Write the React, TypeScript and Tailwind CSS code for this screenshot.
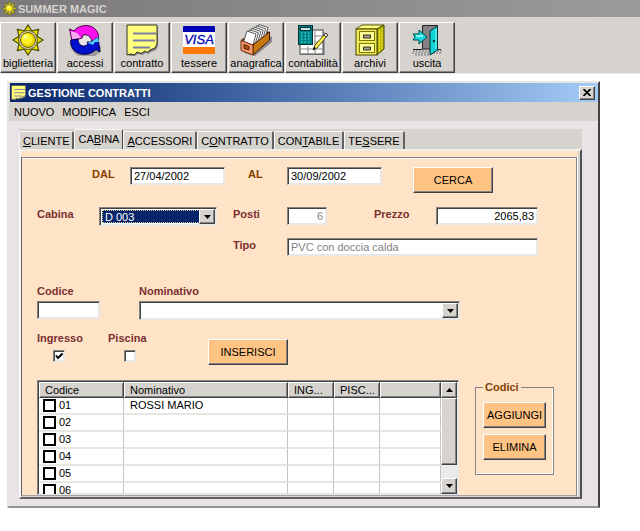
import { useState } from 'react';
import type { InputHTMLAttributes, ReactNode } from 'react';
import clsx from 'clsx';

const sunken =
  'border border-t-[#848284] border-l-[#848284] border-r-[#e7e7e7] border-b-[#e7e7e7] shadow-[inset_1px_1px_0_#424142,inset_-1px_-1px_0_#e7e7e7]';
const raised =
  'border border-t-white border-l-white border-r-[#424142] border-b-[#424142] shadow-[inset_-1px_-1px_0_#848284]';

const rays = [0, 45, 90, 135, 180, 225, 270, 315];

function SunIcon({ className }: { className: string }) {
  return (
    <svg viewBox="0 0 32 32" className={className} aria-hidden="true">
      {rays.map((angle) => (
        <path
          key={angle}
          d="M11 9 L16 1 L21 9 Z"
          fill="#efe300"
          stroke="#4a4a00"
          strokeWidth="1.2"
          transform={`rotate(${angle} 16 16)`}
        />
      ))}
      <circle cx="16" cy="16" r="9.500" fill="#d6d3ce" stroke="#5a5a00" strokeWidth="1" />
      <circle cx="16" cy="16" r="7.5" fill="#e7cf00" stroke="#6b6100" strokeWidth="1" />
      <circle cx="15" cy="15" r="5.5" fill="#fff22a" />
      <circle cx="13.5" cy="13" r="2" fill="#ffffa0" />
    </svg>
  );
}

function NoteIcon({ className }: { className: string }) {
  return (
    <svg viewBox="0 0 32 32" className={className} aria-hidden="true">
      <path d="M3 3 H32 V22 L30 26 L25 28 L22 30 L20 29 L16 31 L12 30 L9 32 H3 Z" fill="#848284" />
      <path
        d="M1 1 H31 V20 L29 24 L24 26 L21 28.500 L19 27 L15 29.500 L11 28 L8 31 L5 30 L1 31 Z"
        fill="#ffff7b"
        stroke="#31302a"
        strokeWidth="1"
      />
      <path d="M7 9.5 H30 M7 16.5 H29 M7 23.5 H24" stroke="#7b7da5" strokeWidth="2" />
    </svg>
  );
}

function AccessIcon() {
  return (
    <svg viewBox="0 0 32 32" className="size-8" aria-hidden="true">
      <path d="M5 20 A13 12 0 0 0 30 22" fill="none" stroke="#9c9a9c" strokeWidth="8" />
      <path d="M5 12 H24 V24 H8 Z" fill="#e7e3e7" />
      <path
        d="M0.500 5 L5 7 C9 1 22 -1 27 6 C30 10 30 13 29 16 L23 18 C22 12 18 10 14 11 L13 14 L3 17 Z"
        fill="#ff10ef"
        stroke="#4a004a"
        strokeWidth="1"
      />
      <path d="M3.500 16 L1.500 7 L8 9 L12 13.500 Z" fill="#f7aaef" />
      <path
        d="M31 28 L27 25.500 C21 32 9 32 4 25 C2 22 1 19 2 16 L9 15 C9 22 15 24 19 20 L18 18 L22 18 L29 13 Z"
        fill="#0010ce"
        stroke="#00004a"
        strokeWidth="1"
      />
      <path d="M29 13 L30 18 L26 18 L24 21 L18 18.500 L22 18 Z" fill="#52cbf7" />
    </svg>
  );
}

function VisaIcon() {
  return (
    <svg viewBox="0 0 32 32" className="size-8" aria-hidden="true">
      <rect x="0" y="2" width="32" height="28" rx="1" fill="#fff" />
      <path d="M0 8 V3 Q0 2 1 2 H31 Q32 2 32 3 V8 Z" fill="#0000b5" />
      <path d="M0 23 H32 V29 Q32 30 31 30 H1 Q0 30 0 29 Z" fill="#ff7900" />
      <text
        x="16"
        y="20"
        textAnchor="middle"
        fontFamily="'Liberation Sans', Arial, sans-serif"
        fontSize="13"
        fontStyle="italic"
        fill="#0000b5"
        stroke="#0000b5"
        strokeWidth="0.300"
      >
        VISA
      </text>
    </svg>
  );
}

function CardBoxIcon() {
  return (
    <svg viewBox="0 0 32 32" className="size-8" aria-hidden="true">
      <path d="M4 29 L15 32 L32 18 V12 Z" fill="#8c8a8c" />
      <path d="M1 16 L18 4 L29 8 L13 21 Z" fill="#5a2800" />
      {[5, 4, 3, 2, 1, 0].map((step) => (
        <path
          key={step}
          d="M3.500 18 L7 7 L16 10 L13 21 Z"
          fill="#fff"
          stroke="#5a595a"
          strokeWidth="1"
          transform={`translate(${step * 2.4} ${step * -1.3})`}
        />
      ))}
      <path d="M13 21 L29.500 8 V16 L13 31 Z" fill="#c67910" stroke="#4a1800" strokeWidth="1" />
      <path d="M1 16.500 L13 21 V31 L1 26.500 Z" fill="#f79a73" stroke="#6b2800" strokeWidth="1" />
      <path d="M4 20.500 L9 22.500 V26 L4 24.500 Z" fill="#ad5110" stroke="#5a2000" strokeWidth="1" />
    </svg>
  );
}

function CalculatorIcon() {
  return (
    <svg viewBox="0 0 32 32" className="size-8" aria-hidden="true">
      <rect x="4" y="8" width="24" height="23" fill="#9c9a9c" />
      <rect x="3" y="6" width="23" height="24" fill="#fff" stroke="#424142" />
      <path d="M18 7 V30 M11 22 V30 M17 12 H26 M17 18 H26 M3 25 H26" stroke="#8c8a8c" />
      <rect x="1.500" y="1.500" width="14" height="19" fill="#008284" stroke="#003031" />
      <rect x="3.500" y="3.500" width="10" height="3" fill="#c6e7e7" stroke="#003031" />
      {[9, 12, 15, 18].map((y) => (
        <path key={y} d={`M4 ${y} H13`} stroke="#31cfce" strokeWidth="1.500" strokeDasharray="1.500 2" />
      ))}
      <path d="M29 9 L31 11 L20 24 L16 26 L18 21 Z" fill="#ffef42" stroke="#42412a" strokeWidth="1" />
      <path d="M29 9 L31 11 L29 13 L27 11 Z" fill="#e7e3e7" stroke="#42412a" strokeWidth="1" />
      <path d="M16 26 L17 23 L19 24 Z" fill="#000" />
    </svg>
  );
}

function CabinetIcon() {
  return (
    <svg viewBox="0 0 32 32" className="size-8" aria-hidden="true">
      <path d="M2 5 L8 1 H30 L23 5 Z" fill="#ffff84" stroke="#5a5900" />
      <path d="M23 5 L30 1 V25 L23 31 Z" fill="#bdba00" stroke="#424100" />
      <rect x="2" y="5" width="21" height="26" fill="#efeb52" stroke="#424100" />
      <g fill="#ffff9c" stroke="#7b7900">
        <rect x="5.500" y="7.500" width="15" height="9" />
        <rect x="5.500" y="19.500" width="15" height="9" />
      </g>
      <path d="M9.500 11 H16.500 V14 H9.500 Z M9.500 23 H16.500 V26 H9.500 Z" fill="#a5a2a5" stroke="#313000" />
      <path d="M25.500 7 V28 M28 5 V25" stroke="#e7e342" strokeDasharray="2 1" />
    </svg>
  );
}

function ExitIcon() {
  return (
    <svg viewBox="0 0 32 32" className="size-8" aria-hidden="true">
      <path d="M2 27 H31 M1 29 H30 M4 31 H18" stroke="#a5a2a5" strokeWidth="2" strokeDasharray="2 1" />
      <path d="M11.500 1.500 H26.500 V25 H11.500 Z" fill="#848284" stroke="#212021" />
      <path d="M2 25.500 H11.500 M27 25.500 H30" stroke="#212021" />
      <path d="M19 7 L26.500 2 V26 L19 31 Z" fill="#10d3d6" stroke="#003031" />
      <path d="M25 5 V25" stroke="#84ffff" />
      <circle cx="23" cy="17" r="1.200" fill="#003031" />
      <path d="M2 10 H8 V6 L16 13 L8 20 V16 H2 L4 13 Z" fill="#18d7de" stroke="#004a4a" strokeWidth="1" />
      <path d="M5 12 H12" stroke="#a5ffff" strokeWidth="1.500" />
    </svg>
  );
}

const toolbar = [
  { label: 'biglietteria', icon: <SunIcon className="size-8" /> },
  { label: 'accessi', icon: <AccessIcon /> },
  { label: 'contratto', icon: <NoteIcon className="size-8" /> },
  { label: 'tessere', icon: <VisaIcon /> },
  { label: 'anagrafica', icon: <CardBoxIcon /> },
  { label: 'contabilità', icon: <CalculatorIcon /> },
  { label: 'archivi', icon: <CabinetIcon /> },
  { label: 'uscita', icon: <ExitIcon /> },
];

const tabs = [
  ['', 'C', 'LIENTE'],
  ['CA', 'B', 'INA'],
  ['', 'A', 'CCESSORI'],
  ['C', 'O', 'NTRATTO'],
  ['CON', 'T', 'ABILE'],
  ['TE', 'S', 'SERE'],
];

const rows = [
  { codice: '01', nominativo: 'ROSSI MARIO' },
  { codice: '02', nominativo: '' },
  { codice: '03', nominativo: '' },
  { codice: '04', nominativo: '' },
  { codice: '05', nominativo: '' },
  { codice: '06', nominativo: '' },
];

function Arrow({ up = false }: { up?: boolean }) {
  return (
    <svg viewBox="0 0 7 4" className="h-1 w-[7px]" aria-hidden="true">
      <path d={up ? 'M0 4 L3.500 0 L7 4 Z' : 'M0 0 H7 L3.500 4 Z'} fill="#000" />
    </svg>
  );
}

function Label({ htmlFor, className, children }: { htmlFor: string; className?: string; children: ReactNode }) {
  return (
    <label htmlFor={htmlFor} className={clsx('shrink-0 font-bold leading-[14px]', className ?? 'text-[#7b3031]')}>
      {children}
    </label>
  );
}

function TextBox({ className, ...props }: InputHTMLAttributes<HTMLInputElement>) {
  return <input type="text" className={clsx(sunken, 'h-[18px] min-w-0 bg-white px-[3px] outline-none', className)} {...props} />;
}

function Combo({ id, value, focused = false }: { id: string; value: string; focused?: boolean }) {
  return (
    <div className={clsx(sunken, 'relative flex h-[19px] w-full bg-white p-[2px]')}>
      <select
        id={id}
        defaultValue={value}
        className={clsx(
          'h-full w-full appearance-none pl-[2px] leading-[13px] outline-none',
          focused && 'border border-dotted border-[#d6cf8c] bg-[#08246b] text-white'
        )}
      >
        <option>{value}</option>
      </select>
      <span
        className={clsx(
          raised,
          'pointer-events-none absolute inset-y-[1px] right-[1px] flex w-4 items-center justify-center bg-[#d6d3ce]'
        )}
      >
        <Arrow />
      </span>
    </div>
  );
}

function CheckBox({ id, defaultChecked = false }: { id: string; defaultChecked?: boolean }) {
  return (
    <span className="relative mt-[5px] block size-3">
      <input
        id={id}
        type="checkbox"
        defaultChecked={defaultChecked}
        className={clsx(sunken, 'peer block size-3 appearance-none bg-white')}
      />
      <svg
        viewBox="0 0 12 12"
        className="pointer-events-none absolute inset-0 hidden size-3 peer-checked:block"
        aria-hidden="true"
      >
        <path d="M3 5.500 L5 8 L9.500 3.500" fill="none" stroke="#000" strokeWidth="2" />
      </svg>
    </span>
  );
}

function ActionButton({ className, children }: { className: string; children: ReactNode }) {
  return (
    <button type="button" className={clsx(raised, 'h-[26px] shrink-0 bg-[#ffc384] text-center', className)}>
      {children}
    </button>
  );
}

function CodesTable() {
  const th = clsx(raised, 'h-4 bg-[#d6d3ce] pl-[5px] text-left font-normal leading-[14px] whitespace-nowrap');
  const td = 'h-[17px] border-r border-b-2 border-r-[#c6c3c6] border-b-[#e7e7e2] p-0 leading-[15px]';

  return (
    <div className={clsx(sunken, 'flex h-[115px] min-w-0 flex-1 overflow-hidden bg-white pt-[1px] pl-[1px] pr-[1px]')}>
      <div className="min-w-0 flex-1 overflow-hidden">
        <table className="w-full table-fixed border-separate border-spacing-0">
          <colgroup>
            <col className="w-[85px]" />
            <col />
            <col className="w-[46px]" />
            <col className="w-[46px]" />
            <col className="w-[61px]" />
          </colgroup>
          <thead>
            <tr>
              <th className={th}>Codice</th>
              <th className={th}>Nominativo</th>
              <th className={th}>ING...</th>
              <th className={th}>PISC...</th>
              <th className={th} />
            </tr>
          </thead>
          <tbody>
            {rows.map((row) => (
              <tr key={row.codice}>
                <td className={td}>
                  <label className="flex h-[15px] items-center gap-[3px] pl-1">
                    <input type="checkbox" className="size-[13px] appearance-none border-2 border-black bg-white checked:bg-black" />
                    {row.codice}
                  </label>
                </td>
                <td className={clsx(td, 'pl-1.5')}>{row.nominativo}</td>
                <td className={td} />
                <td className={td} />
                <td className={td} />
              </tr>
            ))}
          </tbody>
        </table>
      </div>
      <div className="flex w-4 shrink-0 flex-col bg-[#ebebe9]">
        <button type="button" aria-label="Su" className={clsx(raised, 'flex h-4 items-center justify-center bg-[#d6d3ce]')}>
          <Arrow up />
        </button>
        <div className={clsx(raised, 'h-[67px] bg-[#d6d3ce]')} />
        <div className="flex-1" />
        <button type="button" aria-label="Giù" className={clsx(raised, 'flex h-4 items-center justify-center bg-[#d6d3ce]')}>
          <Arrow />
        </button>
      </div>
    </div>
  );
}

function CabinaForm() {
  return (
    <form className="border border-t-[#848284] border-r-[#848284] border-b-[#a5a2a5] border-l-[#636163] pt-[9px] pl-[15px] shadow-[inset_0_1px_0_#fff,1px_0_0_#fff]">
      <div className="flex items-start pl-[55px]">
        <Label htmlFor="dal" className="w-[38px] text-[#844100]">DAL</Label>
        <TextBox id="dal" defaultValue="27/04/2002" className="w-[95px]" />
        <Label htmlFor="al" className="ml-[23px] w-[39px] text-[#844100]">AL</Label>
        <TextBox id="al" defaultValue="30/09/2002" className="w-[95px]" />
        <ActionButton className="ml-[31px] w-20">CERCA</ActionButton>
      </div>

      <div className="mt-[14px] flex items-start pr-[38px]">
        <Label htmlFor="cabina" className="w-[62px] text-[#7b3031]">Cabina</Label>
        <div className="w-[118px] shrink-0">
          <Combo id="cabina" value="D 003" focused />
        </div>
        <Label htmlFor="posti" className="ml-4 w-[54px] text-[#7b3031]">Posti</Label>
        <TextBox id="posti" defaultValue="6" disabled className="w-10 text-right text-[#848284]" />
        <Label htmlFor="prezzo" className="ml-[47px] w-[62px] text-[#7b3031]">Prezzo</Label>
        <TextBox id="prezzo" defaultValue="2065,83" className="flex-1 text-right" />
      </div>

      <div className="mt-3 flex items-start pr-[38px] pl-[196px]">
        <Label htmlFor="tipo" className="w-[54px] text-[#7b3031]">Tipo</Label>
        <TextBox id="tipo" defaultValue="PVC con doccia calda" disabled className="flex-1 text-[#848284]" />
      </div>

      <div className="mt-7 flex items-start gap-[39px] pr-[116px]">
        <div className="flex w-[63px] flex-col gap-[3px]">
          <Label htmlFor="codice">Codice</Label>
          <TextBox id="codice" />
        </div>
        <div className="flex flex-1 flex-col gap-[3px]">
          <Label htmlFor="nominativo">Nominativo</Label>
          <Combo id="nominativo" value="" />
        </div>
      </div>

      <div className="mt-[11px] flex items-start">
        <div className="flex w-[71px] flex-col">
          <Label htmlFor="ingresso">Ingresso</Label>
          <div className="pl-4">
            <CheckBox id="ingresso" defaultChecked />
          </div>
        </div>
        <div className="flex w-[100px] flex-col">
          <Label htmlFor="piscina">Piscina</Label>
          <div className="pl-4">
            <CheckBox id="piscina" />
          </div>
        </div>
        <ActionButton className="mt-2 w-20">INSERISCI</ActionButton>
      </div>

      <div className="mt-[15px] flex items-start gap-4 pr-[22px]">
        <CodesTable />
        <fieldset className="flex h-[95px] w-[79px] shrink-0 flex-col gap-1.5 border border-[#848284] px-[7px] pt-2 shadow-[inset_-1px_-1px_0_#fff]">
          <legend className="px-[2px] font-bold leading-[14px] text-[#844100]">Codici</legend>
          <ActionButton className="w-full">AGGIUNGI</ActionButton>
          <ActionButton className="w-full">ELIMINA</ActionButton>
        </fieldset>
      </div>
    </form>
  );
}

export default function App() {
  const [activeTab, setActiveTab] = useState(1);

  return (
    <div className="min-h-screen bg-white font-['Liberation_Sans',Arial,sans-serif] text-[11px] leading-[14px] text-black">
      <header className="bg-[#d6d3ce]">
        <div className="flex h-[17px] items-center gap-[1px] bg-linear-to-r from-[#7b797b] to-[#9c9a9c] pl-[2px] font-bold text-[#d6d3ce]">
          <SunIcon className="size-[15px]" />
          <h1>SUMMER MAGIC</h1>
        </div>
        <nav className="flex gap-px border-b border-[#e7e7e7] pt-[5px]">
          {toolbar.map((item) => (
            <button
              key={item.label}
              type="button"
              className={clsx(raised, 'flex h-[51px] w-14 shrink-0 flex-col items-center pt-[1px] whitespace-nowrap')}
            >
              {item.icon}
              <span>{item.label}</span>
            </button>
          ))}
        </nav>
      </header>

      <main className="mt-[7px] mr-10 ml-[7px] border-2 border-t-[#e7e7e2] border-r-[#424142] border-b-[#949294] border-l-[#e7e7e2] bg-[#e7e3e7]">
        <div className="flex h-[19px] items-center gap-[2px] border-l border-[#d6d3ce] bg-linear-to-r from-[#08246b] to-[#a5cbf7] pr-[3px] pl-[1px] font-bold text-white">
          <NoteIcon className="size-[15px]" />
          <h2 className="flex-1">GESTIONE CONTRATTI</h2>
          <button type="button" aria-label="Chiudi" className={clsx(raised, 'flex h-[14px] w-4 items-center justify-center bg-[#d6d3ce]')}>
            <svg viewBox="0 0 8 7" className="h-[7px] w-2" aria-hidden="true">
              <path d="M0.500 0 L7.500 7 M7.500 0 L0.500 7" stroke="#000" strokeWidth="1.700" />
            </svg>
          </button>
        </div>
        <div className="flex h-[19px] items-center gap-2 bg-[#d6d3ce] pl-[5px]">
          <button type="button">NUOVO</button>
          <button type="button">MODIFICA</button>
          <button type="button">ESCI</button>
        </div>

        <div className="pt-2 pr-4 pb-[7px] pl-[10px]">
          <div role="tablist" className="flex h-5 items-end bg-[#d6d3ce]">
            {tabs.map(([before, key, after], index) => (
              <button
                key={before + key + after}
                type="button"
                role="tab"
                aria-selected={activeTab === index}
                onClick={() => setActiveTab(index)}
                className={clsx(
                  'rounded-t-[2px] border-t border-l border-[#f7f7f7] px-[3px]',
                  activeTab === index ? 'h-5 border-r border-r-[#424142] pb-[1px]' : 'h-[18px] border-r-2 border-r-[#636163]'
                )}
              >
                {before}
                <u>{key}</u>
                {after}
              </button>
            ))}
          </div>
          <div className="border-2 border-t-[#efefea] border-r-[#525152] border-b-[#636163] border-l-[#f7f7f7] bg-[#d6d3ce] pr-[2px] pb-[1px]">
            <div className="bg-[#ffe3c6] pt-1.5 pr-[1px]">
              <CabinaForm />
            </div>
          </div>
        </div>
      </main>
    </div>
  );
}
